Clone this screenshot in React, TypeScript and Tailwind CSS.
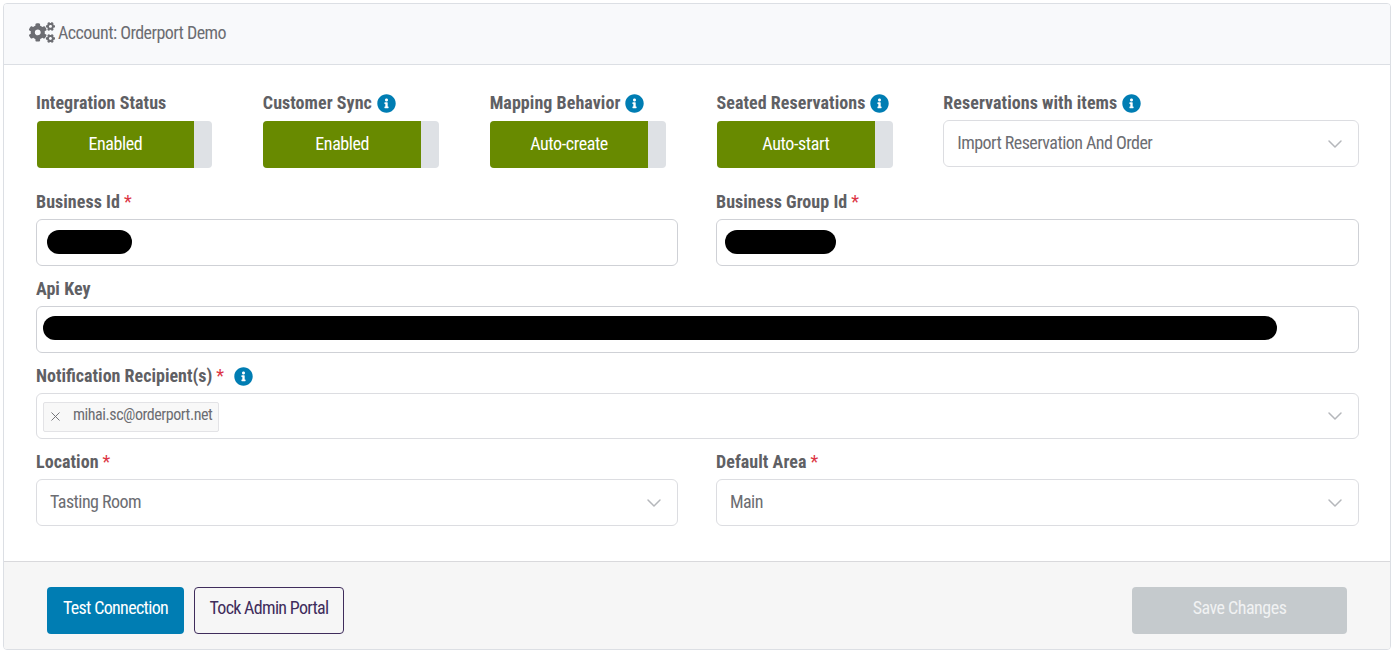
import React from "react";
import { FaCogs, FaInfoCircle } from "react-icons/fa";
import { ChevronDown, X } from "lucide-react";

const Info = () => <FaInfoCircle className="w-[19px] h-[19px] text-[#007db3] shrink-0" />;

const Label = ({ text, required, info }: { text: string; required?: boolean; info?: boolean }) => (
  <div className="flex items-center h-[22px] mb-[6px] text-[18px] leading-[22px] font-bold tracking-[0.05px] text-[#5f6064] gap-[5px]">
    <span>{text}</span>
    {required && <span className="text-[#dc3545] font-normal -ml-[1px]">*</span>}
    {info && <Info />}
  </div>
);

const Toggle = ({ label, value, info }: { label: string; value: string; info?: boolean }) => (
  <div>
    <Label text={label} info={info} />
    <div className="flex w-[175.6px] h-[47px] mt-[7px] -mb-[1px] ml-[0.6px] rounded-[4px] overflow-hidden bg-[#dee1e5]">
      <div className="w-[157.6px] pb-[3px] bg-[#688a00] text-white text-[18px] tracking-[-0.4px] flex items-center justify-center">{value}</div>
    </div>
  </div>
);

const Chevron = () => <ChevronDown className="w-[24px] h-[24px] -mr-[5px] text-[#b5b7bb]" strokeWidth={1.5} />;

const Select = ({ value }: { value: string }) => (
  <div className="flex items-center justify-between h-[47px] pl-[13px] pr-[16px] bg-white border border-[#dcdde1] rounded-[6px] text-[18px] tracking-[-0.55px] text-[#6c6d72]">
    <span className="-mt-[3px]">{value}</span>
    <Chevron />
  </div>
);

const Redacted = ({ width, left }: { width: string; left: string }) => (
  <div className={`flex items-center h-[47px] pb-[2px] bg-white border border-[#cfd1d6] rounded-[6px] ${left}`}>
    <div className={`h-[24px] bg-black rounded-full ${width}`} />
  </div>
);

export default function App() {
  return (
    <div className="p-[3px] h-[651px] bg-white font-['Roboto','Liberation_Sans',sans-serif] [font-stretch:75%]">
      <div className="h-[647px] w-[1388px] flex flex-col border border-[#dcdfe4] rounded-[4px] overflow-hidden">
        <div className="flex items-center h-[61px] pl-[25px] pb-[3px] gap-[3px] bg-[#f8f9fb] border-b border-[#dcdfe4] text-[18px] tracking-[-0.55px] text-[#6c6d72]">
          <FaCogs className="w-[26px] h-[21px] text-[#6c6d72]" />
          <span>Account: Orderport Demo</span>
        </div>

        <div className="flex-1 flex flex-col pl-[32px] pr-[31px] pt-[27px] pb-[35px]">
          <div className="grid grid-cols-6 gap-x-[38px] mb-[24px]">
            <Toggle label="Integration Status" value="Enabled" />
            <Toggle label="Customer Sync" value="Enabled" info />
            <Toggle label="Mapping Behavior" value="Auto-create" info />
            <Toggle label="Seated Reservations" value="Auto-start" info />
            <div className="col-span-2">
              <Label text="Reservations with items" info />
              <Select value="Import Reservation And Order" />
            </div>
          </div>

          <div className="grid grid-cols-[642px_643px] gap-x-[38px] mb-[12px]">
            <div>
              <Label text="Business Id" required />
              <Redacted left="pl-[10px]" width="w-[85px]" />
            </div>
            <div>
              <Label text="Business Group Id" required />
              <Redacted left="pl-[8px]" width="w-[111px]" />
            </div>
          </div>

          <div className="mb-[12px]">
            <Label text="Api Key" />
            <Redacted left="pl-[6px] pb-[3px]" width="w-[1234px]" />
          </div>

          <div className="mb-[12px]">
            <div className="flex items-center h-[22px] mb-[6px] text-[18px] leading-[22px] font-bold text-[#5f6064]">
              <span>Notification Recipient(s)</span>
              <span className="text-[#dc3545] font-normal ml-[4px] mr-[10px]">*</span>
              <Info />
            </div>
            <div className="flex items-center justify-between h-[46px] pl-[6px] pr-[16px] bg-white border border-[#dcdde1] rounded-[6px]">
              <div className="flex items-center h-[30px] pl-[4px] pr-[6px] gap-[10px] mt-[2px] bg-[#f8f8f8] border border-[#e3e3e6] rounded-[2px] text-[16px] tracking-[-0.45px] text-[#6c6d72]">
                <X className="w-[15px] h-[15px] -mt-[1px] text-[#6c6d72]" strokeWidth={1.5} />
                <span className="-mt-[5px]">mihai.sc@orderport.net</span>
              </div>
              <Chevron />
            </div>
          </div>

          <div className="grid grid-cols-[642px_643px] gap-x-[38px]">
            <div>
              <Label text="Location" required />
              <Select value="Tasting Room" />
            </div>
            <div>
              <Label text="Default Area" required />
              <Select value="Main" />
            </div>
          </div>
        </div>

        <div className="flex items-start justify-between h-[88px] pl-[43px] pr-[43px] pt-[25px] bg-[#f6f6f6] border-t border-[#d9d9dc] text-[18px]">
          <div className="flex gap-[10px]">
            <button className="w-[137px] h-[47px] pb-[6px] rounded-[4px] bg-[#007db3] text-white tracking-[-0.67px]">Test Connection</button>
            <button className="w-[150px] h-[47px] pb-[6px] rounded-[4px] border border-[#3f2d5c] text-[#3f2d5c] tracking-[-0.7px]">Tock Admin Portal</button>
          </div>
          <button className="w-[215px] h-[47px] pb-[6px] rounded-[4px] bg-[#c5cacd] text-[#f1f2f3] tracking-[-0.5px]">Save Changes</button>
        </div>
      </div>
    </div>
  );
}
